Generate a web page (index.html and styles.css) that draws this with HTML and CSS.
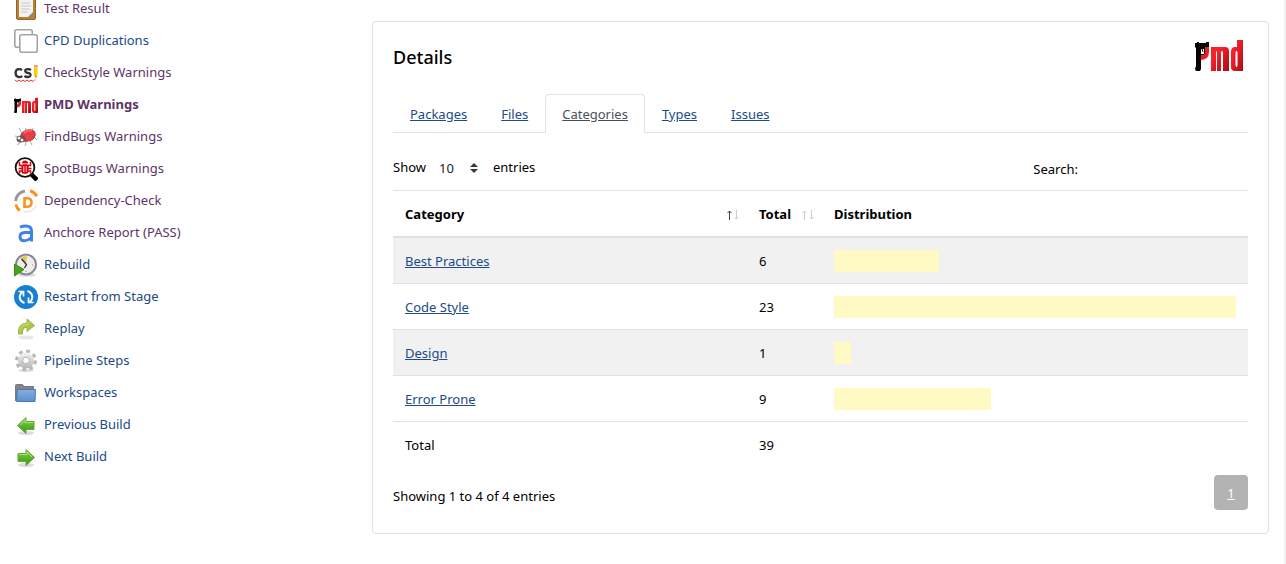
FILE: index.html
```html
<!DOCTYPE html>
<html lang="en">
<head>
<meta charset="utf-8">
<title>PMD Warnings</title>
<link rel="stylesheet" href="styles.css">
</head>
<body>
<svg class="defs" aria-hidden="true">
  <defs>
    <linearGradient id="red" x1="0" y1="0" x2="1" y2="1"><stop offset=".3" stop-color="#f5222d"/><stop offset="1" stop-color="#a80c10"/></linearGradient>
    <linearGradient id="green" x1="0" y1="0" x2="0" y2="1"><stop offset="0" stop-color="#9bdb57"/><stop offset=".5" stop-color="#5db52a"/><stop offset="1" stop-color="#3c9412"/></linearGradient>
    <linearGradient id="blue" x1="0" y1="0" x2="0" y2="1"><stop offset="0" stop-color="#86afe0"/><stop offset="1" stop-color="#5b8fcf"/></linearGradient>
    <linearGradient id="steel" x1="0" y1="0" x2="0" y2="1"><stop offset="0" stop-color="#f4f4f4"/><stop offset="1" stop-color="#b5b5b5"/></linearGradient>
    <symbol id="pmd" viewBox="0 0 48 32">
      <path d="M8 6h6v6q0 8-9 8v-5h3z" fill="#ee1c25"/>
      <path d="M0 3h2V2h2v1h7V2h3v5H10v6q0 2-3 2H6v14l-1 2H1l-1-2 1-3V8L0 7z" fill="#050505"/>
      <path d="M6 9h3v5H6z" fill="#fff"/><path d="M7 9l1 3" stroke="#000"/>
      <path d="M16 7h14q4 0 4 4v20h-6V13q0-2-1-2t-1 2v18h-4V13q0-2-1-2v20h-5z" fill="url(#red)"/>
      <path fill-rule="evenodd" d="M42 0h6v31H40q-4 0-4-4V12q0-5 4-5h2zM41.500 11q-1 0-1 2v12q0 2 1 2t1-2V13q0-2-1-2z" fill="url(#red)"/>
    </symbol>
    <symbol id="arrow" viewBox="0 0 24 24">
      <ellipse cx="12" cy="20" rx="8" ry="2" fill="#ddd"/>
      <path d="M4 8.500h8V4.500l8.500 8-8.500 8v-4H4z" fill="url(#green)" stroke="#62a83c"/>
      <path d="M5 9.500h8V7l5 5" fill="none" stroke="#a5de74"/>
    </symbol>
  </defs>
</svg>
<div class="page">
  <nav class="tasks" aria-label="Build tasks">
    <a class="task visited" href="#"><svg viewBox="0 0 24 24"><rect x="2.500" y="0" width="19" height="22.500" rx="1.500" fill="#b9802f" stroke="#986523"/><path d="M5 2h14v18H5z" fill="#f3f3f1"/><path d="M8 0h8v3H8z" fill="#777"/><path d="M7 6h9M7 9h10M7 12h9M7 15h7" stroke="#c9c9c9"/><path d="M19 15v5h-5z" fill="#888"/></svg><span>Test Result</span></a>
    <a class="task" href="#"><svg viewBox="0 0 24 24" fill="#fff" stroke="#a3a3a3" stroke-width="1.600"><rect x=".8" y=".8" width="17.500" height="17.500" rx="2"/><rect x="5.800" y="5.800" width="17.500" height="17.500" rx="2"/></svg><span>CPD Duplications</span></a>
    <a class="task visited" href="#"><svg viewBox="0 0 24 24"><g fill="none" stroke="#333" stroke-width="2.300"><path d="M8 9.200Q6.500 8 4.500 8.200 1.600 8.600 1.600 12t3 4Q7 16.300 8.300 15"/><path d="M17 9Q15.500 8 13.500 8.200q-2.500.4-2.300 2 .2 1.500 3 1.800 2.500.4 2.300 2.200Q16 16 13.700 16q-2 0-3.300-1"/></g><path d="M20 4h3.500v10L22 17l-2-3z" fill="#fc0"/><path d="M20 4h3.500v2H20z" fill="#f39494"/><path d="M20 14l2 3 1-2" fill="#d99130"/><path d="M1 19l2 1.500 2-1.500 2 1.500L9 19l2 1.500 2-1.500 2 1.500 2-1.500 2 1.500 2-2" fill="none" stroke="#ef3030"/></svg><span>CheckStyle Warnings</span></a>
    <a class="task visited current" href="#" aria-current="page"><svg viewBox="0 0 24 24"><use href="#pmd" y="4.500" width="24" height="16"/></svg><span>PMD Warnings</span></a>
    <a class="task visited" href="#"><svg viewBox="0 0 24 24"><g fill="none" stroke="#aaa"><path d="M8 8L5 3M11 7l1-4M18 7l1-4M20 12l3 3M16 16l2 4M12 17l-1 4M5 12l-4-1M7 17l-4 3"/></g><ellipse cx="14" cy="10.500" rx="7.500" ry="5.500" transform="rotate(-22 14 10.500)" fill="#ea3c42" stroke="#9d3a3d"/><path d="M10 8q5-4 8-2" fill="none" stroke="#f76a69" stroke-width="2"/><ellipse cx="7" cy="14" rx="4.500" ry="3.500" fill="#685454"/><circle cx="5" cy="13" r="1.500" fill="#eee"/><circle cx="8" cy="15" r="1.500" fill="#eee"/></svg><span>FindBugs Warnings</span></a>
    <a class="task visited" href="#"><svg viewBox="0 0 24 24"><path d="M16.500 16.500L23 23" stroke="#000" stroke-width="4.500"/><circle cx="11" cy="10.500" r="9.400" fill="#fff" stroke="#111" stroke-width="1.800"/><g fill="none" stroke="#d9000d" stroke-width="1.500"><path d="M5.500 5v3.500h3M16.500 5v3.500h-3M4.500 11.500h13M5.500 16.500V14h3M16.500 16.500V14h-3"/></g><path d="M8 6.500q0-3 3-3t3 3z" fill="#d9000d"/><rect x="7.500" y="7.200" width="7" height="9.500" rx="2" fill="#d9000d"/><path d="M9.800 9v6M12.200 9v6" stroke="#fff" stroke-width=".8"/></svg><span>SpotBugs Warnings</span></a>
    <a class="task visited" href="#"><svg viewBox="0 0 24 24" fill="none" stroke-width="3"><path d="M1.700 12A10.500 10.500 0 0 1 11 2" stroke="#999"/><path d="M16 1.800a10.500 10.500 0 0 1 6.700 5.500" stroke="#f7941d"/><path d="M1.800 15.500a10.500 10.500 0 0 0 4 6" stroke="#f7941d"/><path d="M22.500 16a10.500 10.500 0 0 1-13 6.500" stroke="#ddd" stroke-width="1"/><path d="M10.500 9.300h3q4 .3 4 4.200t-4 4.200h-3z" stroke="#f7941d" stroke-width="2.600"/></svg><span>Dependency-Check</span></a>
    <a class="task visited" href="#"><svg viewBox="0 0 24 24" fill="none" stroke="#3d84e6" stroke-width="3"><path d="M6 6.200q3-1.200 6-1.200 5.500 0 5.500 5v10.500"/><path d="M17.500 11.500H11q-5 .3-5 4.200 0 4 4.500 4 3.500 0 7-3.200"/></svg><span>Anchore Report (PASS)</span></a>
    <a class="task" href="#"><svg viewBox="0 0 24 24"><ellipse cx="13" cy="22" rx="9" ry="1.800" fill="#ddd"/><circle cx="12" cy="11.500" r="10" fill="#eeeee9" stroke="#8a899b" stroke-width="2"/><path d="M12 11.500L7 4.500q4-2.500 6-1z" fill="#dfc55e"/><path d="M7.500 6l5 5.500-2 3.500" fill="none" stroke="#222" stroke-width="1.200"/><path d="M19 12h-1M12 19v-1" stroke="#888"/><path d="M.5 11L10 16.500.5 23z" fill="#45a51e" stroke="#3a8c18"/></svg><span>Rebuild</span></a>
    <a class="task" href="#"><svg viewBox="0 0 24 24"><circle cx="12" cy="12" r="12" fill="#1780d3"/><g fill="none" stroke="#fff" stroke-width="2"><path d="M10.500 18Q5.500 16 5.700 11.500 6 8.500 8.500 6.800"/><path d="M13.500 6q5 2 4.800 6.500-.3 3-2.800 4.700"/><path d="M4.500 6.500h5v5M19.500 17.500h-5v-5" stroke-width="1.700"/></g></svg><span>Restart from Stage</span></a>
    <a class="task" href="#"><svg viewBox="0 0 24 24"><ellipse cx="12" cy="20.500" rx="8" ry="2" fill="#e8e8e8"/><path d="M4.500 17Q3 7 13 6V2l7.500 6.500-7.500 6V10.500Q8 10 8.500 17z" fill="#acc94a" stroke="#9ab544"/><path d="M5.500 13Q7 7.500 14 7.500V5" fill="none" stroke="#cfe088"/></svg><span>Replay</span></a>
    <a class="task" href="#"><svg viewBox="0 0 24 24"><ellipse cx="12" cy="21.500" rx="8" ry="1.500" fill="#ddd"/><circle cx="12" cy="11.500" r="9.200" fill="none" stroke="#b8b8b8" stroke-width="3.600" stroke-dasharray="3.600 3.625"/><circle cx="12" cy="11.500" r="8" fill="url(#steel)"/><circle cx="12" cy="11.500" r="3.300" fill="#fff" stroke="#b5b5b5"/></svg><span>Pipeline Steps</span></a>
    <a class="task" href="#"><svg viewBox="0 0 24 24"><path d="M1.500 20V4.500q0-1 1-1h6l1.500 2h9.500V10" fill="#858585" stroke="#7a7a7a"/><path d="M3.500 8.500h18l-.5 12H2.500z" fill="url(#blue)" stroke="#467ab8"/></svg><span>Workspaces</span></a>
    <a class="task" href="#"><svg viewBox="0 0 24 24"><use href="#arrow" transform="matrix(-1 0 0 1 24 0)"/></svg><span>Previous Build</span></a>
    <a class="task" href="#"><svg viewBox="0 0 24 24"><use href="#arrow"/></svg><span>Next Build</span></a>
  </nav>
  <main class="card">
    <header class="card-head">
      <h1>Details</h1>
      <svg class="logo" viewBox="0 0 48 32" role="img" aria-label="PMD"><use href="#pmd" width="48" height="32"/></svg>
    </header>
    <nav class="tabs" aria-label="Details views">
      <a href="#">Packages</a><a href="#">Files</a><a class="active" href="#" aria-current="true">Categories</a><a href="#">Types</a><a href="#">Issues</a>
    </nav>
    <div class="controls">
      <label class="length">Show
        <span class="select"><select><option>10</option><option>25</option><option>50</option></select><svg viewBox="0 0 8 10"><path d="M4 0l4 4H0zM0 6h8l-4 4z"/></svg></span>
        entries</label>
      <label class="search">Search:<input type="search"></label>
    </div>
    <table>
      <colgroup><col class="col-category"><col class="col-total"><col></colgroup>
      <thead>
        <tr>
          <th aria-sort="ascending"><div class="sortable">Category<svg class="sort" viewBox="0 0 14 10"><path d="M3.500 10V1M1.500 3l2-2 2 2"/><path class="off" d="M10.500 0v9M8.500 7l2 2 2-2"/></svg></div></th>
          <th><div class="sortable">Total<svg class="sort" viewBox="0 0 14 10"><path class="off" d="M3.500 10V1M1.500 3l2-2 2 2M10.500 0v9M8.500 7l2 2 2-2"/></svg></div></th>
          <th>Distribution</th>
        </tr>
      </thead>
      <tbody>
        <tr><td><a href="#">Best Practices</a></td><td>6</td><td><div class="bar" style="width:26.1%"></div></td></tr>
        <tr><td><a href="#">Code Style</a></td><td>23</td><td><div class="bar" style="width:100%"></div></td></tr>
        <tr><td><a href="#">Design</a></td><td>1</td><td><div class="bar" style="width:4.35%"></div></td></tr>
        <tr><td><a href="#">Error Prone</a></td><td>9</td><td><div class="bar" style="width:39.1%"></div></td></tr>
      </tbody>
      <tfoot><tr><td>Total</td><td>39</td><td></td></tr></tfoot>
    </table>
    <footer class="card-foot">
      <span class="info">Showing 1 to 4 of 4 entries</span>
      <a class="page-link" href="#" aria-current="page">1</a>
    </footer>
  </main>
</div>
</body>
</html>
```
FILE: styles.css
```css
* { box-sizing: border-box; }
body {
  margin: 0;
  font: 13px/22px "Noto Sans", "Open Sans", sans-serif;
  color: #000;
  background: #fff;
}
a { color: #204a87; }
.defs { position: absolute; width: 0; height: 0; }
.page {
  display: flex;
  align-items: flex-start;
  min-height: 100vh;
  padding-right: 15px;
  border-right: 2px solid #f0f0f0;
  overflow: hidden;
}

.tasks {
  flex: 0 0 372px;
  padding-left: 14px;
  margin-top: -8px;
}
.task {
  display: flex;
  align-items: center;
  gap: 6px;
  height: 32px;
  text-decoration: none;
}
.task svg { width: 24px; height: 24px; margin-top: 2px; }
.visited { color: #5c3566; }
.current { font-weight: 700; }

.card {
  flex: 1;
  min-width: 0;
  margin-top: 21px;
  padding: 10px 20px 23px;
  border: 1px solid #dfdfdf;
  border-radius: 4px;
}
.card-head {
  display: flex;
  justify-content: space-between;
  align-items: center;
  height: 48px;
  padding-right: 5px;
}
h1 { margin: 0; padding-top: 2px; font-size: 18px; font-weight: 500; }
.logo { width: 48px; height: 32px; }

.tabs {
  display: flex;
  margin-top: 14px;
  border-bottom: 1px solid #dee2e6;
}
.tabs a {
  padding: 8px 16px 7px;
  margin-bottom: -1px;
  border: 1px solid transparent;
  border-radius: 4px 4px 0 0;
}
.tabs .active {
  color: #495057;
  background: #fff;
  border-color: #dee2e6 #dee2e6 #fff;
}

.controls {
  display: flex;
  justify-content: space-between;
  align-items: flex-start;
  padding: 21px 0 7px;
}
.length, .search { display: flex; align-items: center; }
.length { height: 25px; }
.search { height: 29px; }
.select {
  display: flex;
  align-items: center;
  width: 67px;
  padding: 3px 15px 0 13px;
}
.select select {
  flex: 1;
  min-width: 0;
  appearance: none;
  padding: 0;
  border: 0;
  background: none;
  font: inherit;
  color: #222;
}
.select svg { width: 8px; height: 10px; fill: #343a40; }
.search input {
  width: 162px;
  height: 28px;
  margin-left: 8px;
  border: 0;
  font: inherit;
}

table {
  width: 100%;
  table-layout: fixed;
  border-collapse: separate;
  border-spacing: 0;
}
.col-category { width: 354px; }
.col-total { width: 75px; }
th, td {
  padding: 13px 12px 11px;
  border-top: 1px solid #dee2e6;
  text-align: left;
  line-height: 21px;
}
th { border-bottom: 2px solid #dee2e6; }
tbody tr:first-child td { border-top: 0; }
tbody tr:nth-child(odd) { background: #f1f1f1; }
.sortable {
  display: flex;
  justify-content: space-between;
  align-items: center;
  margin-right: -5px;
}
.sort { width: 14px; height: 10px; fill: none; stroke: #444; }
.sort .off { stroke: #ccc; }
.bar { height: 22px; background: #fff9c4; }
td:has(.bar) { padding-block: 12px 11px; }

.card-foot {
  display: flex;
  justify-content: space-between;
  align-items: center;
  margin-top: 8px;
}
.info { padding-top: 7px; }
.page-link {
  min-width: 34px;
  padding: 7px 12px 6px;
  border-radius: 4px;
  text-align: center;
  color: #fff;
  background: #b3b3b3;
}
```
